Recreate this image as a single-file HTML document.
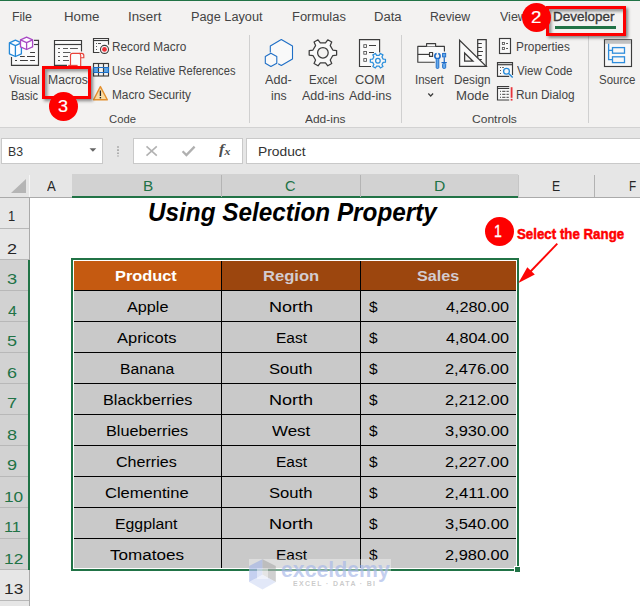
<!DOCTYPE html>
<html lang="en">
<head>
<meta charset="utf-8">
<title>Using Selection Property</title>
<style>
html,body{margin:0;padding:0;background:#fff;}
#app{position:relative;width:640px;height:606px;overflow:hidden;background:#fff;font-family:"Liberation Sans",sans-serif;}
#app div,#app svg,#app span{position:absolute;}
.t{white-space:pre;line-height:1;transform-origin:0 0;font-family:"Liberation Sans",sans-serif;}
.t.r{font-family:"Liberation Serif",serif;}
.ribbon{left:0;top:0;width:640px;height:127px;background:#f3f2f1;border-bottom:1px solid #d2d2d2;}
.topline{left:0;top:0;width:640px;height:1px;background:#217346;}
.sep{width:1px;background:#d0d0d0;top:35px;height:88px;}
.fbar{left:0;top:128px;width:640px;height:46px;background:#e6e6e6;}
.box{background:#fff;border:1px solid #c9c9c9;box-sizing:border-box;top:138px;height:26px;}
.colhdr{left:0;top:174px;width:640px;height:24px;background:#e6e6e6;border-bottom:1px solid #aaa;box-sizing:border-box;}
.colsel{left:72px;top:174px;width:446px;height:22px;background:#d2d2d2;border-bottom:2px solid #217346;}
.vsep{top:175px;width:1px;height:22px;background:#b2b2b2;}
.rowhdr{left:0;top:198px;width:29px;height:408px;background:#e6e6e6;border-right:1px solid #aaa;}
.rowsel{left:0;top:260px;width:28px;height:310px;background:#d2d2d2;border-right:2px solid #217346;}
.hsep{left:0;width:29px;height:1px;background:#b8b8b8;}
.cell{background:#c9c9c9;}
.hl{background:#000;height:1px;}
.vl{background:#000;width:1px;}
.redbox{border:3px solid #fe0000;box-sizing:border-box;box-shadow:2px 2px 3px rgba(0,0,0,.45), inset 2.5px 2.5px 3px rgba(0,0,0,.38);}
.circ{border-radius:50%;background:#fe0000;}

</style>
</head>
<body>
<div id="app">
<!-- ribbon -->
<div class="ribbon"></div>
<div class="topline"></div>
<div class="sep" style="left:249px"></div>
<div class="sep" style="left:401px"></div>
<div class="sep" style="left:588px"></div>
<div style="left:554.5px;top:26px;width:61.3px;height:3px;background:#217346"></div>
<svg style="left:0;top:0" width="640" height="128" viewBox="0 0 640 128" fill="none" stroke-linecap="butt">
<!-- Visual Basic -->
<g stroke="#3c3c3c" stroke-width="1.15">
<path d="M34 40.4H38.5V65.3H11.5V57" fill="#fafafa"/>
<path d="M11.5 57V44H34V40.4" fill="#fafafa" stroke="none"/>
<path d="M34 44.5H38.5"/>
<path d="M30.1 52.5H35M20 56.5H24.8M27 56.5H35M15 60.5H17M20 60.5H27.9M30.1 60.5H35"/>
</g>
<g stroke="#2489d8" stroke-width="1.3" fill="#fcfdff" stroke-linejoin="round">
<path d="M15.4 40.2L21.4 42.9V53.8L15.4 56.5L9.4 53.8V42.9Z"/>
<path d="M9.4 42.9L15.4 45.6L21.4 42.9M15.4 45.6V56.5" fill="none"/>
</g>
<g stroke="#a848c4" stroke-width="1.3" fill="#fefcff" stroke-linejoin="round">
<path d="M26.6 37.2L32.6 39.9V46.9L26.6 49.5L20.5 46.9V39.9Z"/>
<path d="M20.5 39.9L26.6 42.7L32.6 39.9M26.6 42.7V49.5" fill="none"/>
</g>
<!-- Macros -->
<g stroke="#3c3c3c" stroke-width="1.15">
<path d="M67 65.3H54.5V40.5H81.5V51.5" fill="#fafafa"/>
<path d="M67 65.3H81.5V51.5" fill="#fafafa" stroke="none"/>
<path d="M54.5 44.5H81.5"/>
<path d="M58 48.5H60M63 48.5H68M70 48.5H77.9M58 52.5H60M63 52.5H70.5M58 56.5H60M63 56.5H68M58 60.5H60M63 60.5H69" stroke="#5a5a5a"/>
</g>
<path d="M70.5 66V55.4Q70.5 53.4 72.6 53.4H81.6Q83.8 53.4 83.8 55.6V57.7H80.7V66" stroke="#e8423a" stroke-width="1.15" fill="#fbfbfb"/>
<path d="M80.7 57.7V55.4Q80.7 53.5 79.2 53.4" stroke="#e8423a" stroke-width="1.1"/>
<path d="M68.2 65.4H77.6" stroke="#e8423a" stroke-width="1.1"/>
<!-- Record Macro -->
<g stroke="#3c3c3c" stroke-width="1.15">
<path d="M99.5 52.5H93.5V38.5H108.5V44.8" fill="#fafafa"/>
<path d="M99.5 52.5H108.5V44.8" fill="#fafafa" stroke="none"/>
<path d="M93.5 40.5H108.5"/>
<path d="M96 43.5H97M98 43.5H101M96 46.5H97M96 49.5H97" stroke="#555"/>
<circle cx="104.5" cy="49.4" r="4" fill="#fff"/>
</g>
<circle cx="104.5" cy="49.4" r="2.4" fill="#ea2f36"/>
<!-- Use Relative References -->
<rect x="93.5" y="67.5" width="5" height="5" fill="#5aa7ea"/>
<rect x="103.5" y="67.5" width="5" height="5" fill="#5aa7ea"/>
<g stroke="#3c3c3c" stroke-width="1.15">
<rect x="93.5" y="63.5" width="15" height="12.5"/>
<path d="M98.5 63.5V76M103.5 63.5V76M93.5 67.5H108.5M93.5 72.5H108.5"/>
</g>
<rect x="93.5" y="67.5" width="15" height="5" stroke="#1f6fc6" stroke-width="1"/>
<!-- Macro Security -->
<path d="M100.4 86.6L107.3 99.8H93.6Z" fill="#f9dca4" stroke="#e38f2e" stroke-width="1.4" stroke-linejoin="round"/>
<path d="M100.4 90.5V96" stroke="#222" stroke-width="1.3"/>
<rect x="99.7" y="97" width="1.4" height="1.4" fill="#222"/>
<!-- Add-ins -->
<g stroke="#1f6fc6" stroke-width="1.1" stroke-linejoin="round">
<path d="M270.3 52.6V46L281.3 39.5L292.5 46V59L281.3 65.5L278.2 63.7" fill="#f9f9f9"/>
<path d="M270.9 53.2L276.8 56.4V63.2L270.9 66.4L265.3 63.2V56.4Z" fill="#f9f9f9"/>
</g>
<!-- Excel Add-ins gear -->
<g stroke="#3c3c3c" stroke-width="1.25" stroke-linejoin="round">
<path d="M332.83 50.05L336.61 50.52L336.61 55.08L332.83 55.55L330.24 60.02L331.73 63.53L327.78 65.82L325.48 62.77L320.32 62.77L318.02 65.82L314.07 63.53L315.56 60.02L312.97 55.55L309.19 55.08L309.19 50.52L312.97 50.05L315.56 45.58L314.07 42.07L318.02 39.78L320.32 42.83L325.48 42.83L327.78 39.78L331.73 42.07L330.24 45.58Z" fill="#f9f9f9"/>
<circle cx="322.9" cy="52.8" r="5.3" fill="#f3f2f1"/>
</g>
<!-- COM Add-ins -->
<g stroke="#3c3c3c" stroke-width="1.15">
<path d="M371 66.5H359.5V39.6H379.6V52.6" fill="#fafafa"/>
<rect x="363.8" y="44.7" width="2.7" height="2.7" fill="#fff" stroke-width="0.85" stroke="#4a4a4a"/>
<rect x="363.8" y="51.5" width="2.7" height="2.7" fill="#fff" stroke-width="0.85" stroke="#4a4a4a"/>
<rect x="363.8" y="58.6" width="2.7" height="2.7" fill="#fff" stroke-width="0.85" stroke="#4a4a4a"/>
<path d="M369 45.5H376M369 52.5H374"/>
</g>
<g stroke="#2b8fdc" stroke-width="1.25" stroke-linejoin="round" fill="#f7f7f7">
<path d="M383.15 59.07L385.46 59.25L385.46 62.15L383.15 62.33L381.93 64.44L382.94 66.52L380.42 67.98L379.12 66.06L376.68 66.06L375.38 67.98L372.86 66.52L373.87 64.44L372.65 62.33L370.34 62.15L370.34 59.25L372.65 59.07L373.87 56.96L372.86 54.88L375.38 53.42L376.68 55.34L379.12 55.34L380.42 53.42L382.94 54.88L381.93 56.96Z"/>
<circle cx="377.9" cy="60.7" r="2.3"/>
</g>
<!-- Insert -->
<g stroke="#3c3c3c" stroke-width="1.15" stroke-linejoin="round">
<path d="M434.8 62.2H417.8V46.4H444.4V51.4" fill="#fafafa"/>
<path d="M426.6 46.4V43.6H435.6V46.4" fill="#fafafa"/>
<path d="M417.8 54.4H429.3"/>
<rect x="429.5" y="52.5" width="3.1" height="3.9" fill="#fafafa"/>
</g>
<g stroke="#1a68c6" stroke-width="0.9" fill="#64a9ea">
<circle cx="437.45" cy="56.1" r="2.65" stroke-width="1.6" fill="#f3f2f1"/>
<rect x="436.65" y="52" width="1.6" height="3.6" fill="#f3f2f1" stroke="none"/>
<rect x="436.2" y="58.4" width="2.6" height="10" rx="0.9"/>
<rect x="442.6" y="53.4" width="3.1" height="3.5"/>
<rect x="443.65" y="57.2" width="1.2" height="5" fill="#1a68c6" stroke="none"/>
<rect x="441.5" y="62" width="5.3" height="1.2" fill="#1a68c6" stroke="none"/>
<rect x="442.6" y="63.4" width="3.1" height="5" rx="1"/>
</g>
<path d="M428.3 93.5L430.7 96L433.1 93.5" stroke="#3c3c3c" stroke-width="1.25"/>
<!-- Design Mode -->
<g stroke="#3c3c3c" stroke-width="1.25" stroke-linejoin="miter">
<path d="M477.7 58V39.7H486.2V66.3" fill="#fafafa"/>
<path d="M459.6 40.2V66.4H486.2Z" fill="#fafafa"/>
<path d="M464.6 53V61.2H473Z" fill="#f3f2f1"/>
<path d="M477.7 43.5H481.8M477.7 47.5H481.8M477.7 51.5H483M477.7 55.5H481.8M479.5 59.5H481.8" stroke-width="1.05"/>
</g>
<!-- Properties -->
<g stroke="#3c3c3c" stroke-width="1.15">
<rect x="499.5" y="38.5" width="11" height="15" fill="#fafafa"/>
<rect x="502.35" y="42.45" width="2.2" height="2.1" fill="#fff" stroke="#555" stroke-width="0.85"/>
<rect x="502.35" y="47.4" width="2.2" height="2.1" fill="#fff" stroke="#555" stroke-width="0.85"/>
<path d="M506.1 43.5H508M506.1 48.5H508" stroke="#555"/>
</g>
<!-- View Code -->
<g stroke="#3c3c3c" stroke-width="1.15">
<path d="M509.2 76.4H497.5V62.6H512.5V75" fill="#fafafa"/>
<path d="M497.5 64.7H512.5"/>
<path d="M500 67.5H501M502.2 67.5H503.8M500 70.5H501M500 73.5H501" stroke="#555"/>
</g>
<circle cx="506.5" cy="71.2" r="2.9" stroke="#2288d9" stroke-width="1.3" fill="#f8f8f8"/>
<path d="M508.7 73.5L512.7 77.6" stroke="#2288d9" stroke-width="1.4"/>
<!-- Run Dialog -->
<g stroke="#3c3c3c" stroke-width="1.15">
<path d="M509.2 100H497.5V86.5H509.2" fill="#fafafa"/>
<path d="M497.5 88.4H509.2"/>
<path d="M500 91.4H501M502.2 91.4H505.4M506.5 91.4H508.8M500 94.4H501M502.2 94.4H505.4M506.5 94.4H508.8M500 97.4H501M502.2 97.4H505.4M506.5 97.4H508.8" stroke="#666"/>
</g>
<path d="M511.6 87.2V97.8" stroke="#e8333a" stroke-width="1.8"/>
<rect x="510.7" y="98.9" width="1.8" height="1.7" fill="#e8333a"/>
<!-- Source -->
<rect x="604.5" y="39.8" width="27" height="26.7" fill="#f8f8f8" stroke="#3c3c3c" stroke-width="1.15"/>
<rect x="605" y="40.3" width="26" height="3.5" fill="#c2c2c2"/>
<g stroke="#2e8ddc" stroke-width="1.3">
<path d="M608.6 43.8V59.7H612.5M608.6 50.4H612.5"/>
<rect x="612.5" y="47.6" width="12" height="5.6"/>
<rect x="612.5" y="56.8" width="12" height="5.8"/>
</g>
</svg>

<span class="t" style="left:11.90px;top:11.000px;font-size:12px;transform:scale(1.0352,1);color:#444;">File</span>
<span class="t" style="left:64.33px;top:11.000px;font-size:12px;transform:scale(1.1088,1);color:#444;">Home</span>
<span class="t" style="left:127.75px;top:11.000px;font-size:12px;transform:scale(1.1113,1);color:#444;">Insert</span>
<span class="t" style="left:191.38px;top:11.000px;font-size:12px;transform:scale(1.0620,1);color:#444;">Page Layout</span>
<span class="t" style="left:291.86px;top:11.000px;font-size:12px;transform:scale(1.0774,1);color:#444;">Formulas</span>
<span class="t" style="left:374.35px;top:11.000px;font-size:12px;transform:scale(1.0886,1);color:#444;">Data</span>
<span class="t" style="left:430.42px;top:11.000px;font-size:12px;transform:scale(1.0220,1);color:#444;">Review</span>
<span class="t" style="left:499.53px;top:11.000px;font-size:12px;transform:scale(1.0427,1);color:#444;">View</span>
<span class="t" style="left:553.34px;top:11.000px;font-size:12px;transform:scale(1.1231,1);color:#3b3b3b;-webkit-text-stroke:0.35px #3b3b3b;">Developer</span>
<span class="t" style="left:9.35px;top:74.000px;font-size:12px;transform:scale(0.9475,1);color:#444;">Visual</span>
<span class="t" style="left:11.03px;top:90.000px;font-size:12px;transform:scale(0.9172,1);color:#444;">Basic</span>
<span class="t" style="left:47.52px;top:74.000px;font-size:12px;transform:scale(1.0157,1);color:#444;">Macros</span>
<span class="t" style="left:265.33px;top:74.000px;font-size:12px;transform:scale(1.0529,1);color:#444;">Add-</span>
<span class="t" style="left:270.86px;top:90.000px;font-size:12px;transform:scale(1.0184,1);color:#444;">ins</span>
<span class="t" style="left:308.99px;top:74.000px;font-size:12px;transform:scale(0.9544,1);color:#444;">Excel</span>
<span class="t" style="left:302.33px;top:90.000px;font-size:12px;transform:scale(1.0444,1);color:#444;">Add-ins</span>
<span class="t" style="left:355.35px;top:74.000px;font-size:12px;transform:scale(1.0626,1);color:#444;">COM</span>
<span class="t" style="left:349.33px;top:90.000px;font-size:12px;transform:scale(1.0444,1);color:#444;">Add-ins</span>
<span class="t" style="left:415.43px;top:74.000px;font-size:12px;transform:scale(0.9551,1);color:#444;">Insert</span>
<span class="t" style="left:454.46px;top:74.000px;font-size:12px;transform:scale(0.9783,1);color:#444;">Design</span>
<span class="t" style="left:456.34px;top:90.000px;font-size:12px;transform:scale(1.0990,1);color:#444;">Mode</span>
<span class="t" style="left:599.47px;top:74.000px;font-size:12px;transform:scale(0.9552,1);color:#444;">Source</span>
<span class="t" style="left:111.76px;top:41.000px;font-size:12px;transform:scale(0.9846,1);color:#444;">Record Macro</span>
<span class="t" style="left:111.78px;top:65.000px;font-size:12px;transform:scale(0.9304,1);color:#444;">Use Relative References</span>
<span class="t" style="left:111.76px;top:89.000px;font-size:12px;transform:scale(0.9859,1);color:#444;">Macro Security</span>
<span class="t" style="left:515.96px;top:41.000px;font-size:12px;transform:scale(0.9841,1);color:#444;">Properties</span>
<span class="t" style="left:516.64px;top:65.000px;font-size:12px;transform:scale(0.9590,1);color:#444;">View Code</span>
<span class="t" style="left:515.96px;top:89.000px;font-size:12px;transform:scale(0.9866,1);color:#444;">Run Dialog</span>
<span class="t" style="left:109.18px;top:114.000px;font-size:11.1px;transform:scale(1.0158,1);color:#444;">Code</span>
<span class="t" style="left:304.82px;top:114.000px;font-size:11.1px;transform:scale(1.0764,1);color:#444;">Add-ins</span>
<span class="t" style="left:471.66px;top:114.000px;font-size:11.1px;transform:scale(1.0856,1);color:#444;">Controls</span>
<!-- formula bar -->
<div class="fbar"></div>
<div class="box" style="left:1px;width:102px"></div>
<div class="box" style="left:133px;width:110px"></div>
<div class="box" style="left:246px;width:400px"></div>
<svg style="left:0;top:128px" width="640" height="46" viewBox="0 128 640 46" fill="none">
<path d="M89.5 148.3H96.3L92.9 151.8Z" fill="#666"/>
<path d="M118 146.2V156.5" stroke="#adadad" stroke-width="2" stroke-dasharray="1.6 1.5"/>
<path d="M146.5 146.3L156.8 155.6M156.8 146.3L146.5 155.6" stroke="#b2b2b2" stroke-width="1.6"/>
<path d="M182.6 151.3L186.4 155.1L194.6 146.6" stroke="#b0b0b0" stroke-width="2.3"/>
</svg>
<span class="t" style="left:8.14px;top:146.000px;font-size:12.4px;transform:scale(0.9906,1);color:#333;">B3</span>
<span class="t" style="left:258.10px;top:146.000px;font-size:12.4px;transform:scale(1.1147,1);color:#333;">Product</span>
<span class="t r" style="left:218.90px;top:142.000px;font-size:15px;transform:scale(1.0849,1);color:#4d4d4d;font-style:italic;font-weight:bold;">f<span style="position:relative;top:1.3px;font-size:.72em">x</span></span>
<!-- column header -->
<div class="colhdr"></div>
<div class="colsel"></div>
<div class="vsep" style="left:29px;background:#f6f6f6"></div>
<div class="vsep" style="left:221px;background:#b4b4b4"></div>
<div class="vsep" style="left:360px;background:#b4b4b4"></div>
<div class="vsep" style="left:518px;background:#c6c6c6"></div>
<div class="vsep" style="left:594px"></div>
<div style="left:10.5px;top:178.5px;width:0;height:0;border-left:15.5px solid transparent;border-bottom:14.5px solid #b5b5b5"></div>
<!-- row header -->
<div class="rowhdr"></div>
<div class="rowsel"></div>
<div class="hsep" style="top:228px"></div>
<div class="hsep" style="top:259px"></div>
<div class="hsep" style="top:290px"></div>
<div class="hsep" style="top:321px"></div>
<div class="hsep" style="top:352px"></div>
<div class="hsep" style="top:383px"></div>
<div class="hsep" style="top:414px"></div>
<div class="hsep" style="top:445px"></div>
<div class="hsep" style="top:476px"></div>
<div class="hsep" style="top:507px"></div>
<div class="hsep" style="top:538px"></div>
<div class="hsep" style="top:569px"></div>
<div class="hsep" style="top:600px"></div>

<div style="left:28px;top:260px;width:2px;height:310px;background:#217346"></div>
<span class="t" style="left:46.86px;top:178.000px;font-size:15px;transform:scale(0.8738,1);color:#262626;">A</span>
<span class="t" style="left:142.62px;top:178.000px;font-size:15px;transform:scale(1.0231,1);color:#217346;">B</span>
<span class="t" style="left:285.39px;top:178.000px;font-size:15px;transform:scale(0.9736,1);color:#217346;">C</span>
<span class="t" style="left:434.00px;top:178.000px;font-size:15px;transform:scale(1.0448,1);color:#217346;">D</span>
<span class="t" style="left:551.56px;top:178.000px;font-size:15px;transform:scale(0.8162,1);color:#262626;">E</span>
<span class="t" style="left:628.60px;top:178.000px;font-size:15px;transform:scale(0.7822,1);color:#262626;">F</span>
<span class="t" style="left:8.44px;top:208.000px;font-size:15px;transform:scale(0.8626,1);color:#262626;">1</span>
<span class="t" style="left:7.08px;top:241.000px;font-size:15px;transform:scale(1.2035,1);color:#262626;">2</span>
<span class="t" style="left:6.98px;top:271.000px;font-size:15px;transform:scale(1.2129,1);color:#217346;">3</span>
<span class="t" style="left:8.09px;top:303.000px;font-size:15px;transform:scale(1.0585,1);color:#217346;">4</span>
<span class="t" style="left:7.03px;top:333.000px;font-size:15px;transform:scale(1.2035,1);color:#217346;">5</span>
<span class="t" style="left:7.07px;top:365.000px;font-size:15px;transform:scale(1.1993,1);color:#217346;">6</span>
<span class="t" style="left:7.08px;top:395.000px;font-size:15px;transform:scale(1.2035,1);color:#217346;">7</span>
<span class="t" style="left:7.04px;top:427.000px;font-size:15px;transform:scale(1.2059,1);color:#217346;">8</span>
<span class="t" style="left:7.04px;top:457.000px;font-size:15px;transform:scale(1.2080,1);color:#217346;">9</span>
<span class="t" style="left:3.62px;top:489.000px;font-size:15px;transform:scale(1.1537,1);color:#217346;">10</span>
<span class="t" style="left:4.40px;top:519.000px;font-size:15px;transform:scale(1.0854,1);color:#217346;">11</span>
<span class="t" style="left:3.62px;top:551.000px;font-size:15px;transform:scale(1.1546,1);color:#217346;">12</span>
<span class="t" style="left:3.62px;top:581.000px;font-size:15px;transform:scale(1.1540,1);color:#262626;">13</span>
<!-- table -->
<div style="left:71px;top:258px;width:448px;height:313px;box-sizing:border-box;border:2px solid #217346;background:#fff"></div>
<div class="cell" style="left:74px;top:261px;width:442px;height:307px"></div>
<div style="left:74px;top:261px;width:147px;height:29px;background:#c55a11"></div>
<div style="left:222px;top:261px;width:294px;height:29px;background:#9c460e"></div>
<div class="hl" style="left:74px;top:290px;width:442px"></div>
<div class="hl" style="left:74px;top:321px;width:442px"></div>
<div class="hl" style="left:74px;top:352px;width:442px"></div>
<div class="hl" style="left:74px;top:383px;width:442px"></div>
<div class="hl" style="left:74px;top:414px;width:442px"></div>
<div class="hl" style="left:74px;top:445px;width:442px"></div>
<div class="hl" style="left:74px;top:476px;width:442px"></div>
<div class="hl" style="left:74px;top:507px;width:442px"></div>
<div class="hl" style="left:74px;top:538px;width:442px"></div>
<div class="vl" style="left:221px;top:261px;height:307px"></div>
<div class="vl" style="left:360px;top:261px;height:307px"></div>

<div style="left:515px;top:567px;width:5px;height:5px;background:#217346;outline:1px solid #fff"></div>
<span class="t" style="left:147.58px;top:200.000px;font-size:25.2px;transform:scale(0.9642,1);color:#000;font-weight:bold;font-style:italic;">Using Selection Property</span>
<span class="t" style="left:115.35px;top:268.000px;font-size:15.3px;transform:scale(1.0697,1);font-weight:bold;color:#fff;">Product</span>
<span class="t" style="left:263.14px;top:268.000px;font-size:15.3px;transform:scale(1.0851,1);font-weight:bold;color:#d3ccd0;">Region</span>
<span class="t" style="left:417.48px;top:268.000px;font-size:15.3px;transform:scale(1.0578,1);font-weight:bold;color:#d3ccd0;">Sales</span>
<span class="t" style="left:126.83px;top:299.000px;font-size:15.5px;transform:scale(1.0468,1);color:#000;">Apple</span>
<span class="t" style="left:269.35px;top:299.000px;font-size:15.5px;transform:scale(1.1637,1);color:#000;">North</span>
<span class="t" style="left:369.11px;top:299.000px;font-size:15.5px;transform:scale(0.9972,1);color:#000;">$</span>
<span class="t" style="left:446.09px;top:299.000px;font-size:15.5px;transform:scale(1.0439,1);color:#000;">4,280.00</span>
<span class="t" style="left:117.33px;top:330.000px;font-size:15.5px;transform:scale(1.0633,1);color:#000;">Apricots</span>
<span class="t" style="left:275.54px;top:330.000px;font-size:15.5px;transform:scale(1.0014,1);color:#000;">East</span>
<span class="t" style="left:369.11px;top:330.000px;font-size:15.5px;transform:scale(0.9972,1);color:#000;">$</span>
<span class="t" style="left:446.09px;top:330.000px;font-size:15.5px;transform:scale(1.0439,1);color:#000;">4,804.00</span>
<span class="t" style="left:119.52px;top:361.000px;font-size:15.5px;transform:scale(1.0144,1);color:#000;">Banana</span>
<span class="t" style="left:268.87px;top:361.000px;font-size:15.5px;transform:scale(1.0728,1);color:#000;">South</span>
<span class="t" style="left:369.11px;top:361.000px;font-size:15.5px;transform:scale(0.9972,1);color:#000;">$</span>
<span class="t" style="left:445.22px;top:361.000px;font-size:15.5px;transform:scale(1.0583,1);color:#000;">2,476.00</span>
<span class="t" style="left:102.58px;top:392.000px;font-size:15.5px;transform:scale(1.0468,1);color:#000;">Blackberries</span>
<span class="t" style="left:269.35px;top:392.000px;font-size:15.5px;transform:scale(1.1637,1);color:#000;">North</span>
<span class="t" style="left:369.11px;top:392.000px;font-size:15.5px;transform:scale(0.9972,1);color:#000;">$</span>
<span class="t" style="left:445.22px;top:392.000px;font-size:15.5px;transform:scale(1.0583,1);color:#000;">2,212.00</span>
<span class="t" style="left:105.78px;top:423.000px;font-size:15.5px;transform:scale(1.0487,1);color:#000;">Blueberries</span>
<span class="t" style="left:272.34px;top:423.000px;font-size:15.5px;transform:scale(1.0926,1);color:#000;">West</span>
<span class="t" style="left:369.11px;top:423.000px;font-size:15.5px;transform:scale(0.9972,1);color:#000;">$</span>
<span class="t" style="left:445.16px;top:423.000px;font-size:15.5px;transform:scale(1.0595,1);color:#000;">3,930.00</span>
<span class="t" style="left:116.43px;top:454.000px;font-size:15.5px;transform:scale(1.0371,1);color:#000;">Cherries</span>
<span class="t" style="left:275.54px;top:454.000px;font-size:15.5px;transform:scale(1.0014,1);color:#000;">East</span>
<span class="t" style="left:369.11px;top:454.000px;font-size:15.5px;transform:scale(0.9972,1);color:#000;">$</span>
<span class="t" style="left:445.22px;top:454.000px;font-size:15.5px;transform:scale(1.0583,1);color:#000;">2,227.00</span>
<span class="t" style="left:105.39px;top:485.000px;font-size:15.5px;transform:scale(1.0674,1);color:#000;">Clementine</span>
<span class="t" style="left:268.87px;top:485.000px;font-size:15.5px;transform:scale(1.0728,1);color:#000;">South</span>
<span class="t" style="left:369.11px;top:485.000px;font-size:15.5px;transform:scale(0.9972,1);color:#000;">$</span>
<span class="t" style="left:445.20px;top:485.000px;font-size:15.5px;transform:scale(1.0784,1);color:#000;">2,411.00</span>
<span class="t" style="left:115.31px;top:516.000px;font-size:15.5px;transform:scale(1.0198,1);color:#000;">Eggplant</span>
<span class="t" style="left:269.35px;top:516.000px;font-size:15.5px;transform:scale(1.1637,1);color:#000;">North</span>
<span class="t" style="left:369.11px;top:516.000px;font-size:15.5px;transform:scale(0.9972,1);color:#000;">$</span>
<span class="t" style="left:445.16px;top:516.000px;font-size:15.5px;transform:scale(1.0595,1);color:#000;">3,540.00</span>
<span class="t" style="left:110.29px;top:547.000px;font-size:15.5px;transform:scale(1.1028,1);color:#000;">Tomatoes</span>
<span class="t" style="left:275.54px;top:547.000px;font-size:15.5px;transform:scale(1.0014,1);color:#000;">East</span>
<span class="t" style="left:369.11px;top:547.000px;font-size:15.5px;transform:scale(0.9972,1);color:#000;">$</span>
<span class="t" style="left:445.22px;top:547.000px;font-size:15.5px;transform:scale(1.0583,1);color:#000;">2,980.00</span>
<!-- watermark -->
<div style="left:249px;top:559px;width:142px;height:30px;background:rgba(255,255,255,.38)"></div>
<svg style="left:248px;top:558px" width="30" height="33" viewBox="248 558 30 33">
<path d="M249.2 566L262.5 559.2V574.8L249.2 582Z" fill="rgba(150,170,228,.55)"/>
<path d="M262.5 559.2L275.8 566V582L262.5 574.8Z" fill="rgba(150,150,150,.45)"/>
<path d="M249.2 582L262.5 574.8L275.8 582L262.5 589.4Z" fill="rgba(190,205,240,.45)"/>
<path d="M257 568.5H268V579H257Z" fill="rgba(255,255,255,.45)"/>
</svg>
<span class="t" style="left:281.31px;top:559.000px;font-size:22.5px;transform:scale(0.9462,1);color:rgba(166,183,232,.66);font-weight:bold;">exceldemy</span>
<span class="t" style="left:293.04px;top:581.000px;font-size:6.8px;transform:scale(1.0277,1);color:rgba(150,150,150,.5);font-weight:bold;letter-spacing:1.3px;">EXCEL · DATA · BI</span>
<!-- annotations -->
<div class="redbox" style="left:42px;top:66px;width:49px;height:33px"></div>
<div class="redbox" style="left:546px;top:6px;width:80px;height:30px"></div>
<div class="circ" style="left:48.7px;top:91.6px;width:29.6px;height:29.6px"></div>
<div class="circ" style="left:521.8px;top:2.7px;width:29.5px;height:29.5px"></div>
<div class="circ" style="left:484.7px;top:216.6px;width:29.6px;height:29.6px"></div>
<svg style="left:500px;top:235px" width="70" height="60" viewBox="500 235 70 60">
<line x1="557.3" y1="243.7" x2="530.5" y2="271.5" stroke="#fc0505" stroke-width="1.9"/>
<path d="M518.4 283L527.3 267.2L534.8 274.6Z" fill="#fc0505"/>
</svg>
<span class="t" style="left:517.31px;top:226.910px;font-size:16.6px;transform:scale(0.8014,0.93);color:#fe0000;font-weight:bold;-webkit-text-stroke:0.55px #fe0000;">Select the Range</span>
<span class="t" style="left:493.99px;top:223.000px;font-size:17.2px;transform:scale(0.8195,1);color:#fff;-webkit-text-stroke:0.3px #fff;">1</span>
<span class="t" style="left:530.68px;top:9.000px;font-size:17px;transform:scale(1.0973,1);color:#fff;-webkit-text-stroke:0.2px #fff;">2</span>
<span class="t" style="left:57.67px;top:98.000px;font-size:16.5px;transform:scale(1.0958,1);color:#fff;-webkit-text-stroke:0.2px #fff;">3</span>

</div>
</body>
</html>
